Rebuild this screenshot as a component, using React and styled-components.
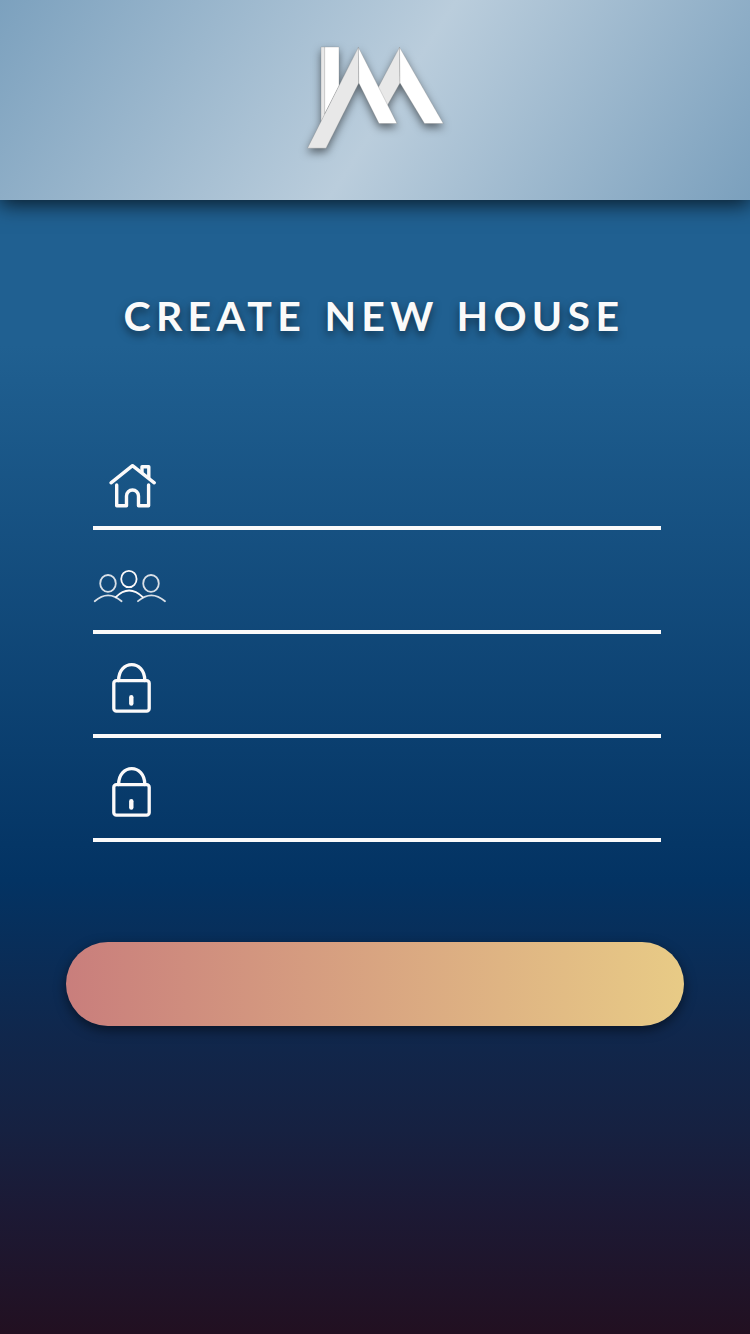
import React from "react";
import styled, { createGlobalStyle } from "styled-components";

const GlobalStyle = createGlobalStyle`
  *, *::before, *::after { box-sizing: border-box; }
  body { margin: 0; background: #231020; }
`;

const Screen = styled.main`
  display: flex;
  flex-direction: column;
  width: 750px;
  height: 1334px;
  overflow: hidden;
  font-family: Lato, "Open Sans", sans-serif;
  background: linear-gradient(
    180deg,
    #206091 0,
    #206091 345px,
    #033363 880px,
    #10274c 1035px,
    #162141 1130px,
    #1c1934 1215px,
    #221021 1334px
  );
`;

const Header = styled.header`
  display: flex;
  justify-content: center;
  flex: 0 0 200px;
  padding-top: 36px;
  background: linear-gradient(122.8deg, #7ca1be 0%, #bacddc 52%, #7ba0bd 100%);
  box-shadow: 0 4px 20px rgba(0, 0, 0, 0.75);
`;

const LogoMark = styled.svg`
  width: 150px;
  height: 124px;
  overflow: visible;
  filter: drop-shadow(0 4px 4px rgba(0, 0, 0, 0.5));
`;

const Title = styled.h1`
  margin: 91px 0 0;
  padding-left: 123.5px;
  height: 50px;
  font-size: 41px;
  line-height: 50px;
  font-weight: 700;
  letter-spacing: 5.3px;
  word-spacing: 3px;
  white-space: nowrap;
  color: #fafafa;
  text-shadow: 0 4px 8px rgba(0, 0, 0, 0.5);
`;

const Form = styled.form`
  display: flex;
  flex-direction: column;
  margin-top: 85px;
`;

const Field = styled.label`
  display: flex;
  width: 567.5px;
  height: 104px;
  margin-left: 93px;
  border-bottom: 4px solid #fbfafa;
`;

const FieldIcon = styled.svg`
  flex: 0 0 80px;
  height: 100px;
  fill: none;
  stroke: #fcfafa;
  stroke-width: ${(p) => p.$weight}px;
  stroke-linecap: round;
  stroke-linejoin: round;
`;

const Input = styled.input`
  flex: 1;
  min-width: 0;
  border: 0;
  outline: 0;
  padding: 0 8px;
  background: transparent;
  color: #fff;
  font: 400 30px Lato, sans-serif;
`;

const SubmitButton = styled.button`
  width: 618px;
  height: 84px;
  margin: 100px 0 0 66px;
  border: 0;
  border-radius: 42px;
  background: linear-gradient(90deg, #c97e7c 0%, #e8cb86 100%);
  box-shadow: 0 4px 12px rgba(0, 0, 0, 0.5);
`;

function Logo() {
  return (
    <LogoMark viewBox="300 36 150 124" role="img">
      <g stroke="#777" strokeOpacity="0.45" strokeWidth="0.6">
        <path fill="#e8e8e8" d="M321 47H325V115L321 122Z" />
        <path fill="#fff" d="M324.7 47H339V86L324.7 114Z" />
        <path fill="#e8e8e8" d="M399.5 47.3L378 88L387 106L400 83Z" />
        <path fill="#fff" d="M399.5 47.3L443.3 123.5H424.5L400 83Z" />
        <path fill="#e8e8e8" d="M358.4 47.3L307.5 148.2H326L358.8 83Z" />
        <path fill="#fff" d="M358.4 47.3L397 123.5H379L358.8 83Z" />
      </g>
    </LogoMark>
  );
}

function HouseIcon() {
  return (
    <FieldIcon viewBox="93 426 80 100" $weight={3.4}>
      <path d="M111 482.8L132.5 465.7L154.3 482.8" />
      <path d="M142 472V466.8H148.8V477.5" />
      <path d="M116.7 485V505.8H126.5V496A6 6 0 0 1 138.5 496V505.8H148.6V485" />
    </FieldIcon>
  );
}

function PeopleIcon() {
  return (
    <FieldIcon viewBox="93 530 80 100" $weight={1.8}>
      <g opacity="0.85">
        <ellipse cx="108" cy="583.4" rx="7.8" ry="8.4" />
        <ellipse cx="151" cy="583.4" rx="7.8" ry="8.4" />
        <path d="M94.7 601.2Q108 589.5 121.6 601.2" />
        <path d="M138 601.2Q151.2 589.5 165 601.2" />
      </g>
      <ellipse cx="128.9" cy="579" rx="7.7" ry="8.2" />
      <path d="M115.8 597.2Q129 583.8 142.8 597.2" />
    </FieldIcon>
  );
}

function LockIcon() {
  return (
    <FieldIcon viewBox="93 634 80 100" $weight={3.3}>
      <rect x="113.8" y="680.7" width="35.4" height="30.4" rx="2.6" />
      <path d="M118.6 680.5C118.6 659.3 144.8 659.3 144.8 680.5" />
      <path strokeWidth="4.4" d="M131.3 697.3V703.6" />
    </FieldIcon>
  );
}

export default function App() {
  return (
    <Screen>
      <GlobalStyle />
      <Header>
        <Logo />
      </Header>
      <Title>CREATE NEW HOUSE</Title>
      <Form>
        <Field>
          <HouseIcon />
          <Input type="text" />
        </Field>
        <Field>
          <PeopleIcon />
          <Input type="text" />
        </Field>
        <Field>
          <LockIcon />
          <Input type="password" />
        </Field>
        <Field>
          <LockIcon />
          <Input type="password" />
        </Field>
        <SubmitButton type="button" />
      </Form>
    </Screen>
  );
}
